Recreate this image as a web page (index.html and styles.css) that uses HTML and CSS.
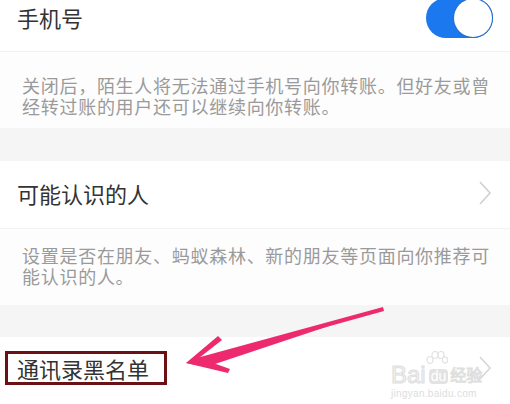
FILE: index.html
```html
<!DOCTYPE html>
<html lang="zh">
<head>
<meta charset="utf-8">
<link rel="stylesheet" href="styles.css">
</head>
<body>
<div class="page">
  <div class="row first">
    <span class="title">手机号</span>
    <span class="toggle"><span class="knob"></span></span>
  </div>
  <div class="desc d1">关闭后，陌生人将无法通过手机号向你转账。但好友或曾经转过账的用户还可以继续向你转账。</div>
  <div class="gap"></div>
  <div class="row">
    <span class="title">可能认识的人</span>
    <svg class="chev" width="14" height="26" viewBox="0 0 14 26"><polyline points="2,2 12,13 2,24" fill="none" stroke="#cfcfcf" stroke-width="1.6"/></svg>
  </div>
  <div class="desc d2">设置是否在朋友、蚂蚁森林、新的朋友等页面向你推荐可能认识的人。</div>
  <div class="gap g2"></div>
  <div class="row last">
    <span class="title">通讯录黑名单</span>
    <svg class="chev" width="14" height="26" viewBox="0 0 14 26"><polyline points="2,2 12,13 2,24" fill="none" stroke="#d6d6d6" stroke-width="1.6"/></svg>
  </div>

  <div class="mark-box"></div>
  <div class="watermark">
    <svg class="paw" width="22" height="18" viewBox="0 0 22 18">
      <g fill="none" stroke="#e2e2e2" stroke-width="1.2">
        <ellipse cx="4" cy="9" rx="3" ry="3.5"/>
        <ellipse cx="9" cy="4" rx="3" ry="3.5"/>
        <ellipse cx="15" cy="4" rx="3" ry="3.5"/>
        <ellipse cx="19" cy="9" rx="2.6" ry="3.2"/>
      </g>
    </svg>
    <div class="wm-main"><span class="wm-bai">Bai</span><span class="wm-du">du</span><span class="wm-jy">经验</span></div>
    <div class="wm-url">jingyan.baidu.com</div>
  </div>
  <svg class="arrow" width="510" height="404" viewBox="0 0 510 404">
    <path d="M383,307 L384,311 L200,362 L193,359 Z" fill="#ee2a6e"/>
    <path d="M186,363 L218,336 L222,340 L199,358 L230,369 L228,373 Z" fill="#ee2a6e"/>
    <path d="M186,363 L383,308 L206,367 Z" fill="#ee2a6e"/>
  </svg>
</div>
</body>
</html>
```
FILE: styles.css
```css
html, body {
  margin: 0;
  padding: 0;
  background: #ffffff;
}
.page {
  position: relative;
  width: 510px;
  height: 404px;
  overflow: hidden;
  font-family: "Noto Sans CJK SC", "Noto Sans", sans-serif;
}
.row {
  height: 67px;
  display: flex;
  align-items: center;
  justify-content: space-between;
  padding: 0 18px 3px 17px;
  background: #ffffff;
  box-sizing: border-box;
}
.row.first {
  margin-top: -15px;
  border-bottom: 1px solid #f1f1f1;
  padding-right: 17px;
  padding-bottom: 2px;
}
.title {
  font-size: 22px;
  color: #333333;
  line-height: 30px;
}
.toggle {
  width: 67px;
  height: 40px;
  margin-top: 1px;
  border-radius: 20px;
  background: #1c78ee;
  display: flex;
  justify-content: flex-end;
  align-items: center;
  padding: 1px;
  box-sizing: border-box;
}
.knob {
  width: 38px;
  height: 38px;
  border-radius: 50%;
  background: #ffffff;
  box-shadow: 0 0 0 1px #2a6fc9;
}
.desc {
  background: #fdfdfd;
  color: #9a9a9a;
  font-size: 18px;
  letter-spacing: 0.72px;
  line-height: 21px;
  padding: 23px 16px 11px 22px;
  border-top: 1px solid #f3f3f3;
}
.desc.d1 { border-top: none; height: 42px; }
.desc.d2 { padding-top: 16px; padding-bottom: 18px; height: 42px; }
.gap {
  height: 33px;
  background: #f5f5f5;
}
.gap.g2 { height: 32px; }
.row.last { height: 67px; padding-bottom: 5px; }
.chev { display: block; }
.mark-box {
  position: absolute;
  left: 5px;
  top: 351px;
  width: 156px;
  height: 28px;
  border: 3px solid #6b1015;
}
.watermark {
  position: absolute;
  left: 391px;
  top: 351px;
  width: 92px;
  font-family: "Liberation Sans", sans-serif;
}
.paw { display: block; margin: 0 0 -6px 35px; }
.wm-main {
  font-size: 24px;
  line-height: 22px;
  color: #f3f3f3;
  -webkit-text-stroke: 1px #dedede;
  white-space: nowrap;
}
.wm-du {
  display: inline-block;
  font-size: 14px;
  line-height: 15px;
  background: #e3e3e3;
  color: #fff;
  -webkit-text-stroke: 0;
  border-radius: 4px;
  padding: 0 2px;
  margin: 0 2px 0 3px;
  vertical-align: 2px;
}
.wm-jy {
  font-family: "Noto Sans CJK SC", sans-serif;
  font-size: 16px;
  vertical-align: 2px;
}
.wm-url {
  font-size: 10px;
  color: #dddddd;
  line-height: 12px;
  margin-top: 2px;
  letter-spacing: 0.3px;
}
.arrow {
  position: absolute;
  left: 0;
  top: 0;
}
```
